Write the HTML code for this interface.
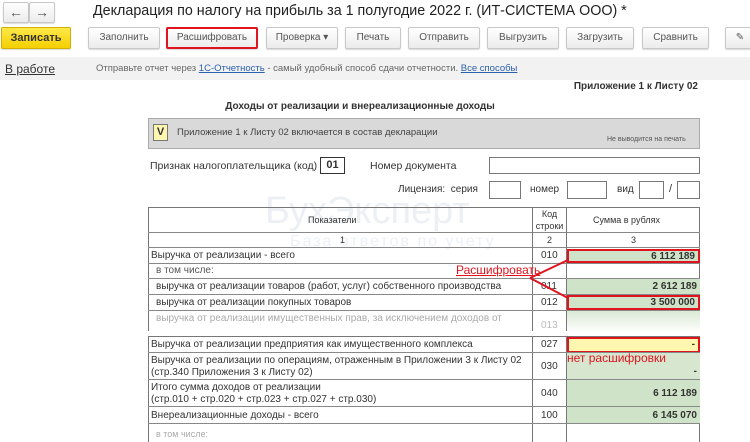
<!DOCTYPE html>
<html><head><meta charset="utf-8"><style>
*{box-sizing:border-box;margin:0;padding:0}
body{width:750px;height:442px;overflow:hidden;background:#fff;font-family:"Liberation Sans",sans-serif;color:#333;position:relative;font-size:11px}
.a{position:absolute}
.btn{position:absolute;top:27px;height:22px;border:1px solid #c8c8c8;border-radius:2px;background:linear-gradient(#fff,#ececec);font-size:10px;color:#555;text-align:center;line-height:20px;box-shadow:0 1px 1px rgba(0,0,0,.15)}
.row{position:absolute;left:148px;width:552px;border-bottom:1px solid #888;font-size:10px}
.num{position:absolute;left:567px;width:133px;background:#cfe3c8;text-align:right;padding-right:3px;font-weight:bold;font-size:10px}
.box{position:absolute;border:1px solid #777;background:#fff}
</style></head><body>
<div class="btn" style="left:3px;top:2px;width:26px;height:21px;font-size:14px;line-height:18px">←</div>
<div class="btn" style="left:29px;top:2px;width:26px;height:21px;font-size:14px;line-height:18px">→</div>
<div class="a" style="left:93px;top:3px;font-size:14.3px;color:#222">Декларация по налогу на прибыль за 1 полугодие 2022 г. (ИТ-СИСТЕМА ООО) *</div>
<div class="btn" style="left:1px;width:70px;background:linear-gradient(#ffe94a,#f5cf00);border-color:#d1b000;font-weight:bold;color:#333;font-size:11px">Записать</div>
<div class="btn" style="left:88px;width:72px">Заполнить</div>
<div class="btn" style="left:166px;width:92px;border:2px solid #e0141e;line-height:18px">Расшифровать</div>
<div class="btn" style="left:266px;width:72px">Проверка ▾</div>
<div class="btn" style="left:345px;width:56px">Печать</div>
<div class="btn" style="left:408px;width:72px">Отправить</div>
<div class="btn" style="left:487px;width:72px">Выгрузить</div>
<div class="btn" style="left:566px;width:68px">Загрузить</div>
<div class="btn" style="left:642px;width:67px">Сравнить</div>
<div class="btn" style="left:725px;width:30px">✎</div>
<div class="a" style="left:0;top:57px;width:750px;height:23px;background:#f2f2f2"></div>
<div class="a" style="left:5px;top:62px;font-size:12px;text-decoration:underline;color:#333">В работе</div>
<div class="a" style="left:96px;top:63px;font-size:9.5px;color:#666">Отправьте отчет через <span style="color:#2a5fb0;text-decoration:underline">1С-Отчетность</span> - самый удобный способ сдачи отчетности. <span style="color:#2a5fb0;text-decoration:underline">Все способы</span></div>
<div class="a" style="right:52px;top:81px;font-size:10px;font-weight:bold;color:#333">Приложение 1 к Листу 02</div>
<div class="a" style="left:0;width:720px;top:101px;text-align:center;font-size:10px;font-weight:bold;color:#333">Доходы от реализации и внереализационные доходы</div>
<div class="a" style="left:265px;top:190px;font-size:38px;color:rgba(170,188,210,.22)">БухЭксперт</div>
<div class="a" style="left:290px;top:233px;font-size:16px;color:rgba(170,188,210,.22);letter-spacing:2px">База ответов по учету</div>
<div class="a" style="left:148px;top:118px;width:552px;height:31px;background:#d9d9d9;border:1px solid #aaa"></div>
<div class="a" style="left:153px;top:124px;width:15px;height:17px;background:#fff6b0;border:1px solid #777;font-weight:bold;text-align:center;line-height:15px;font-size:11px">V</div>
<div class="a" style="left:177px;top:127px;font-size:9.5px;color:#444">Приложение 1 к Листу 02 включается в состав декларации</div>
<div class="a" style="left:607px;top:136px;font-size:7px;color:#555">Не выводится на печать</div>
<div class="a" style="left:150px;top:160px;font-size:10.5px">Признак налогоплательщика (код)</div>
<div class="box" style="left:320px;top:157px;width:25px;height:17px;border-color:#333;font-weight:bold;text-align:center;line-height:15px">01</div>
<div class="a" style="left:370px;top:160px;font-size:10.5px">Номер документа</div>
<div class="box" style="left:489px;top:157px;width:211px;height:17px"></div>
<div class="a" style="left:398px;top:184px;font-size:10px">Лицензия:&nbsp; серия</div>
<div class="box" style="left:489px;top:181px;width:32px;height:18px"></div>
<div class="a" style="left:530px;top:184px;font-size:10px;color:#333">номер</div>
<div class="box" style="left:567px;top:181px;width:40px;height:18px"></div>
<div class="a" style="left:617px;top:184px;font-size:10px">вид</div>
<div class="box" style="left:639px;top:181px;width:25px;height:18px"></div>
<div class="a" style="left:669px;top:183px">/</div>
<div class="box" style="left:677px;top:181px;width:23px;height:18px"></div>
<div class="a" style="left:148px;top:207px;width:552px;height:126px;border:1px solid #777;border-bottom:none"></div>
<div class="a" style="left:148px;top:336px;width:552px;height:106px;border-left:1px solid #777;border-right:1px solid #777;border-top:1px solid #777"></div>
<div class="row" style="top:207px;height:26px"><div class="a" style="left:160px;top:8px;font-size:9px">Показатели</div><div class="a" style="left:385px;top:1px;width:33px;text-align:center;font-size:9px;line-height:12px">Код строки</div><div class="a" style="left:445px;top:8px;font-size:9px">Сумма в рублях</div></div>
<div class="row" style="top:233px;height:15px;font-size:9px"><div class="a" style="left:192px;top:2px">1</div><div class="a" style="left:399px;top:2px">2</div><div class="a" style="left:483px;top:2px">3</div></div>
<div class="a" style="left:532px;top:207px;width:35px;height:126px;border-left:1px solid #777;border-right:1px solid #777"></div>
<div class="a" style="left:532px;top:336px;width:35px;height:106px;border-left:1px solid #777;border-right:1px solid #777"></div>
<div class="num" style="top:249px;height:14px;line-height:11px;border:2px solid #e0141e">6 112 189</div>
<div class="row" style="top:248px;height:16px"><div class="a" style="left:3px;top:2px">Выручка от реализации - всего</div><div class="a" style="left:393px;top:2px">010</div></div>
<div class="row" style="top:264px;height:15px"><div class="a" style="left:8px;top:1px;color:#555">в том числе:</div></div>
<div class="num" style="top:279px;height:15px;line-height:15px">2 612 189</div>
<div class="row" style="top:279px;height:16px"><div class="a" style="left:8px;top:2px">выручка от реализации товаров (работ, услуг) собственного производства</div><div class="a" style="left:393px;top:2px">011</div></div>
<div class="num" style="top:295px;height:15px;line-height:11px;border:2px solid #e0141e">3 500 000</div>
<div class="row" style="top:295px;height:16px"><div class="a" style="left:8px;top:2px">выручка от реализации покупных товаров</div><div class="a" style="left:393px;top:2px">012</div></div>
<div class="a" style="left:567px;top:311px;width:133px;height:22px;background:linear-gradient(#dbe9d5,#fff)"></div>
<div class="a" style="left:156px;top:313px;font-size:10px;color:#aaa">выручка от реализации имущественных прав, за исключением доходов от</div>
<div class="a" style="left:541px;top:320px;font-size:10px;color:#bbb">013</div>
<div class="a" style="left:148px;top:331px;width:552px;height:5px;background:#fff"></div>
<div class="num" style="top:337px;height:16px;background:#fff7b0;border:2px solid #e0141e;line-height:12px">-</div>
<div class="row" style="top:336px;height:17px"><div class="a" style="left:3px;top:3px">Выручка от реализации предприятия как имущественного комплекса</div><div class="a" style="left:393px;top:3px">027</div></div>
<div class="num" style="top:353px;height:27px;line-height:38px;background:#d6e6cf">-</div>
<div class="a" style="left:567px;top:351px;font-size:12px;color:#e0141e">нет расшифровки</div>
<div class="row" style="top:353px;height:27px;line-height:12px"><div class="a" style="left:3px;top:2px">Выручка от реализации по операциям, отраженным в Приложении 3 к Листу 02<br>(стр.340 Приложения 3 к Листу 02)</div><div class="a" style="left:393px;top:8px">030</div></div>
<div class="num" style="top:380px;height:27px;line-height:27px">6 112 189</div>
<div class="row" style="top:380px;height:27px;line-height:12px"><div class="a" style="left:3px;top:2px">Итого сумма доходов от реализации<br>(стр.010 + стр.020 + стр.023 + стр.027 + стр.030)</div><div class="a" style="left:393px;top:8px">040</div></div>
<div class="num" style="top:407px;height:17px;line-height:17px">6 145 070</div>
<div class="row" style="top:407px;height:17px"><div class="a" style="left:3px;top:3px">Внереализационные доходы - всего</div><div class="a" style="left:393px;top:3px">100</div></div>
<div class="a" style="left:156px;top:429px;font-size:9px;color:#aaa">в том числе:</div>
<div class="a" style="left:456px;top:263px;font-size:12px;color:#e0141e;text-decoration:underline">Расшифровать</div>
<svg class="a" style="left:0;top:0" width="750" height="442"><path d="M530 278 L568 260 M530 278 L568 298" stroke="#e0141e" stroke-width="2" fill="none"/></svg>
</body></html>
